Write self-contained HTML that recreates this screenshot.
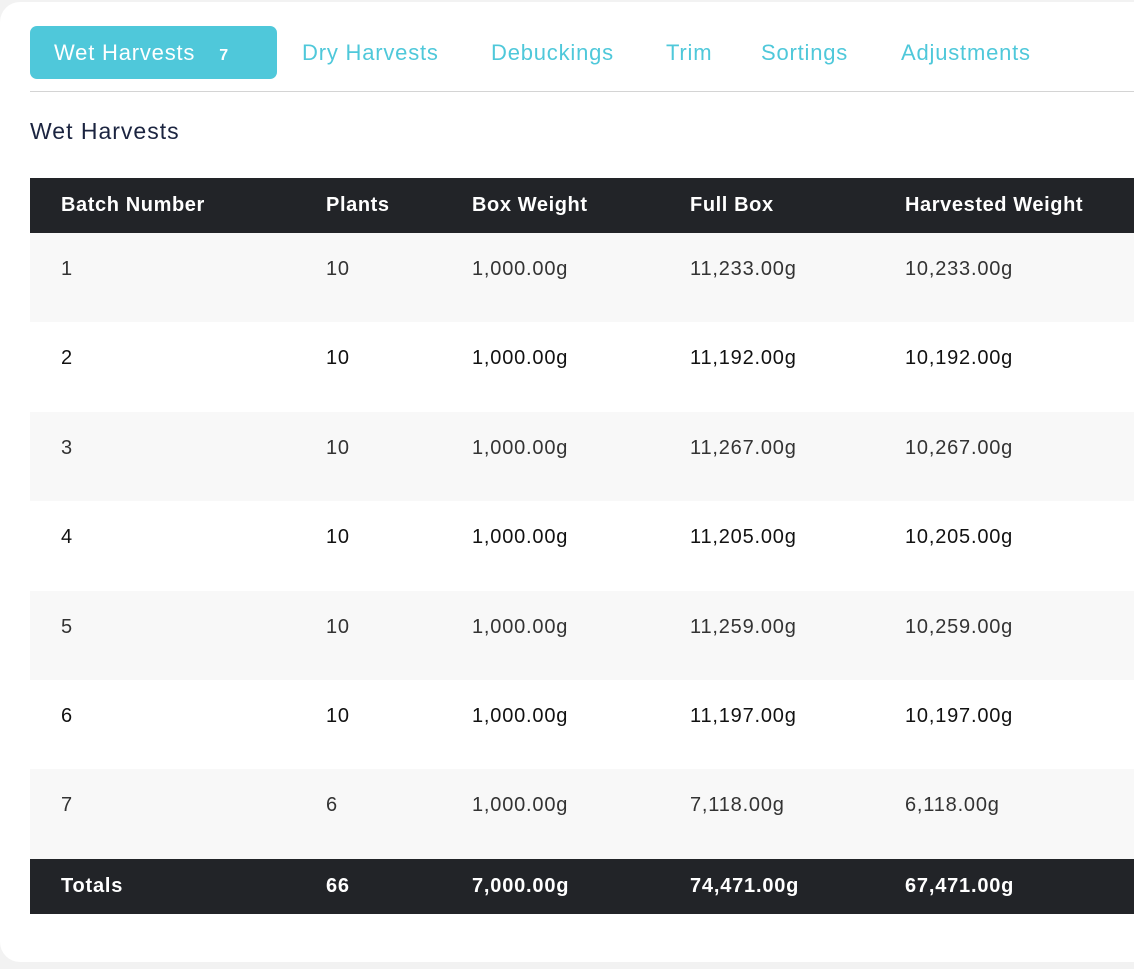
<!DOCTYPE html>
<html><head><style>
body{margin:0;background:#f2f2f2;font-family:"Liberation Sans",sans-serif;width:1134px;height:969px;overflow:hidden;position:relative}
.card{position:absolute;left:0;top:2px;width:1160px;height:960px;background:#fff;border-radius:20px}
.tab{position:absolute;top:26px;height:53px;line-height:53px;font-size:22px;letter-spacing:0.8px;color:#4fc8da;white-space:nowrap}
.act{left:30px;width:247px;background:#4fc8da;color:#fff;border-radius:7px}
.line{position:absolute;left:30px;right:0;top:91px;border-top:1.5px solid #d4d4d4}
h2{position:absolute;left:30px;top:118px;margin:0;font-size:23px;letter-spacing:1px;font-weight:normal;color:#1b2440}
table{position:absolute;left:30px;top:178px;width:1104px;border-collapse:collapse;font-size:20px;letter-spacing:0.8px}
td,th{text-align:left;padding:0;white-space:nowrap}
td:nth-child(1),th:nth-child(1){padding-left:31px;width:265px}
td:nth-child(2),th:nth-child(2){width:146px}
td:nth-child(3),th:nth-child(3){width:218px}
td:nth-child(4),th:nth-child(4){width:215px}
thead tr,tfoot tr{background:#222428;color:#fff;height:55px}
th{font-weight:bold;font-size:20px;letter-spacing:0.6px}
tbody tr{height:89.4px;vertical-align:top}
tbody td{padding-top:25px;color:#333}
tbody tr:nth-child(odd){background:#f8f8f8}
tbody tr:nth-child(even) td{color:#111}
tfoot td{font-weight:bold}
</style></head><body>
<div class="card"></div>
<div class="tab act"><span style="margin-left:24px">Wet Harvests</span><span style="margin-left:24px;font-size:16px;font-weight:bold">7</span></div>
<div class="tab" style="left:302px">Dry Harvests</div>
<div class="tab" style="left:491px">Debuckings</div>
<div class="tab" style="left:666px">Trim</div>
<div class="tab" style="left:761px">Sortings</div>
<div class="tab" style="left:901px">Adjustments</div>
<div class="line"></div>
<h2>Wet Harvests</h2>
<table>
<thead><tr><th>Batch Number</th><th>Plants</th><th>Box Weight</th><th>Full Box</th><th>Harvested Weight</th></tr></thead>
<tbody>
<tr><td>1</td><td>10</td><td>1,000.00g</td><td>11,233.00g</td><td>10,233.00g</td></tr>
<tr><td>2</td><td>10</td><td>1,000.00g</td><td>11,192.00g</td><td>10,192.00g</td></tr>
<tr><td>3</td><td>10</td><td>1,000.00g</td><td>11,267.00g</td><td>10,267.00g</td></tr>
<tr><td>4</td><td>10</td><td>1,000.00g</td><td>11,205.00g</td><td>10,205.00g</td></tr>
<tr><td>5</td><td>10</td><td>1,000.00g</td><td>11,259.00g</td><td>10,259.00g</td></tr>
<tr><td>6</td><td>10</td><td>1,000.00g</td><td>11,197.00g</td><td>10,197.00g</td></tr>
<tr><td>7</td><td>6</td><td>1,000.00g</td><td>7,118.00g</td><td>6,118.00g</td></tr>
</tbody>
<tfoot><tr><td>Totals</td><td>66</td><td>7,000.00g</td><td>74,471.00g</td><td>67,471.00g</td></tr></tfoot>
</table>
</body></html>
